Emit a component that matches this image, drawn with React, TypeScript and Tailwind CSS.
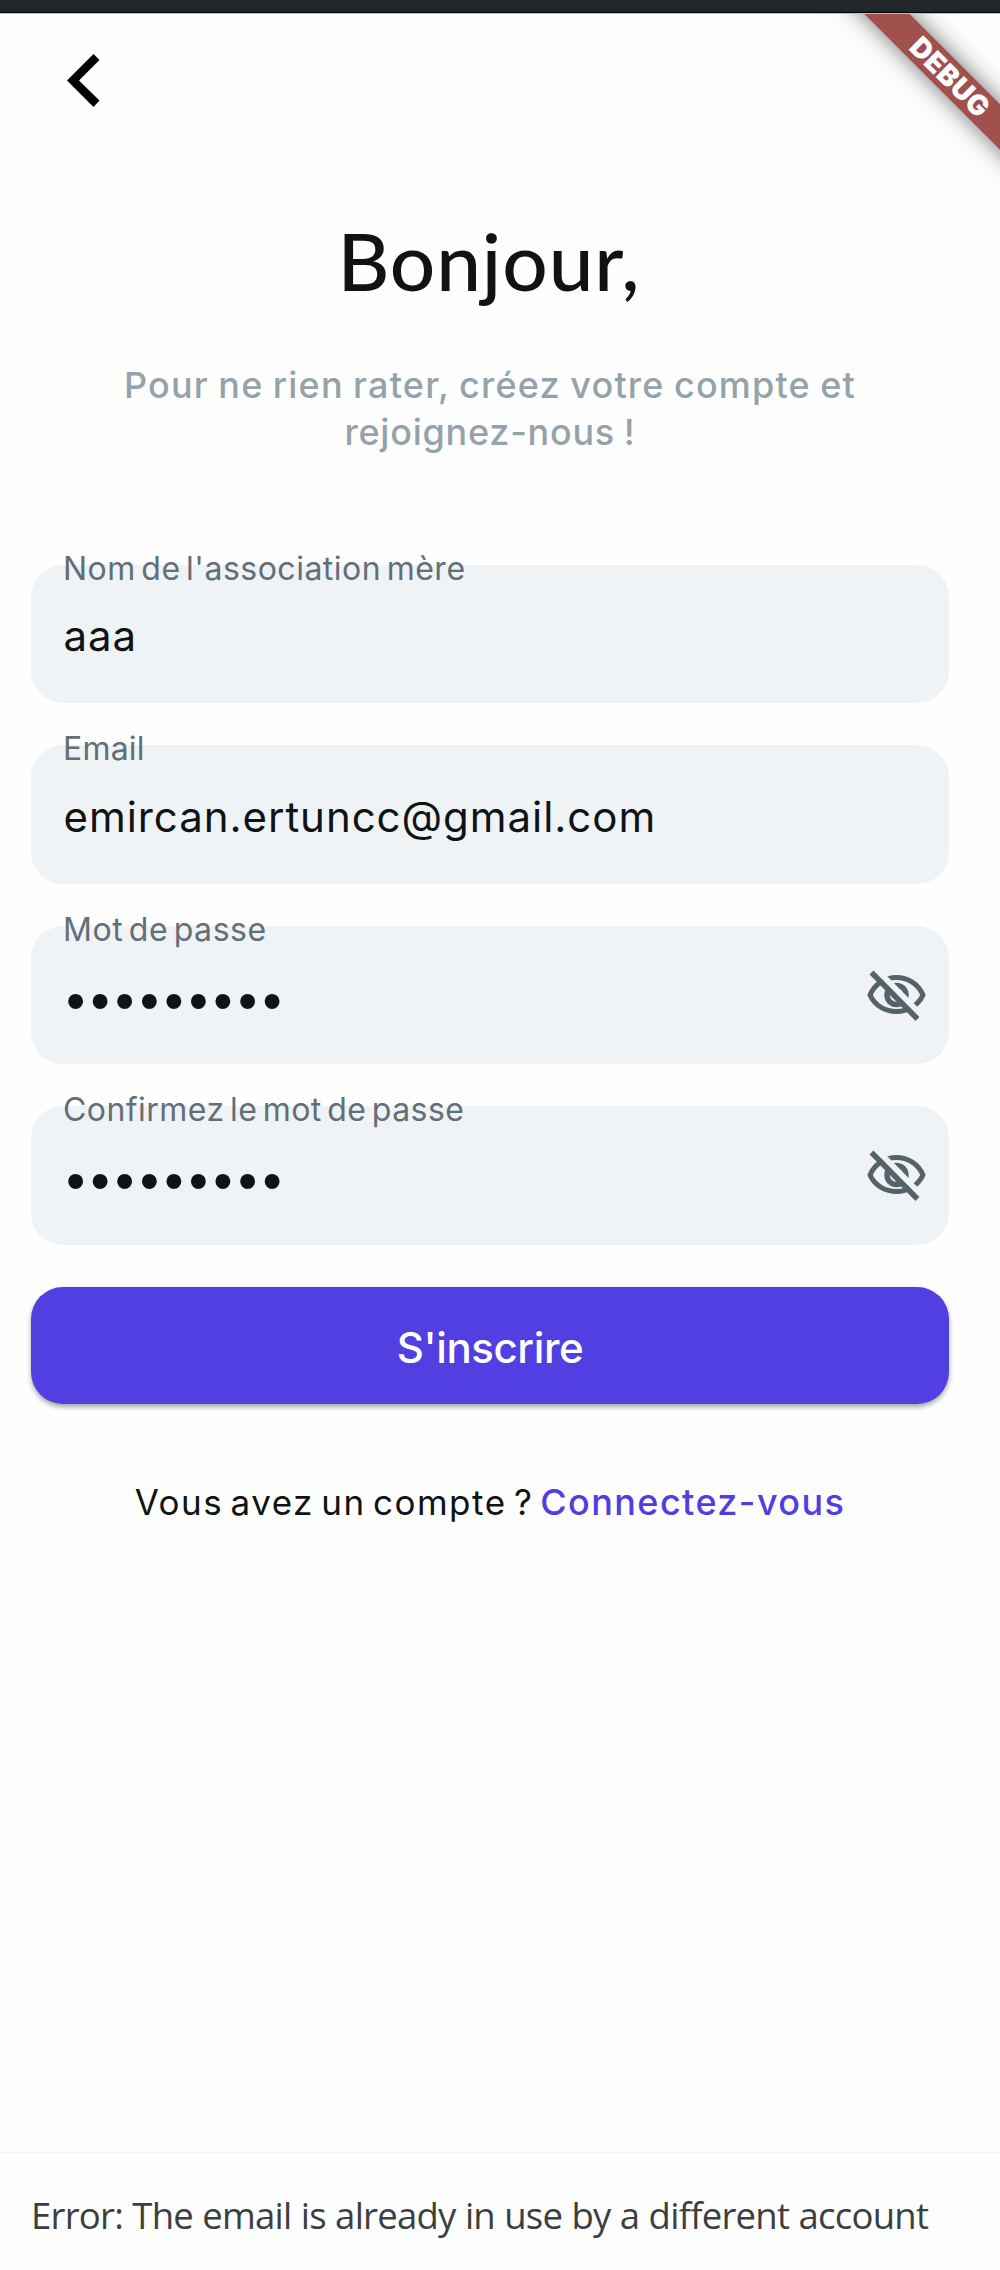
type FieldProps = {
  label: string;
  value: string;
  labelSpacing: string;
  secret?: boolean;
};

function EyeOff() {
  return (
    <svg width="60" height="52" viewBox="0 0 60 52" fill="none" stroke="#56626a" strokeWidth="5">
      <path d="M4 25C14 1.7 47 1.7 57 25C47 47 14 47 4 25Z" strokeLinejoin="round" />
      <circle cx="30.5" cy="25" r="9.5" strokeWidth="5.5" />
      <circle cx="29" cy="25" r="3.5" fill="#56626a" stroke="none" />
      <path d="M9 -2L58 48" stroke="#eff3f6" strokeWidth="6" />
      <path d="M5.5 2.5L51.5 49" strokeWidth="5.5" />
    </svg>
  );
}

function Field({ label, value, labelSpacing, secret = false }: FieldProps) {
  return (
    <div className="flex h-[138.5px] items-start justify-between rounded-[32px] bg-[#eff3f6] pl-[32px] pr-[23px]">
      <div className="flex flex-col whitespace-nowrap">
        <span className={`-mt-[12px] text-[32px] leading-[32px] text-[#636e75] [word-spacing:-4px] ${labelSpacing}`}>
          {label}
        </span>
        {secret ? (
          <span className="mt-[31px] pl-[3px] font-['Liberation_Sans',sans-serif] text-[55px] leading-[48px] tracking-[5.3px] text-[#0f1314]">
            {value}
          </span>
        ) : (
          <span className="mt-[27.5px] pl-[0.5px] text-[42px] leading-[48px] tracking-[0.95px] text-[#0f1314]">{value}</span>
        )}
      </div>
      {secret && (
        <button type="button" aria-label="Afficher le mot de passe" className="mt-[44px]">
          <EyeOff />
        </button>
      )}
    </div>
  );
}

export default function App() {
  return (
    <div className="relative flex h-[2270px] w-[1000px] flex-col overflow-hidden bg-[#fefefe] font-['Inter',sans-serif]">
      <div className="h-[14px] shrink-0 border-b border-[#bfc2c3] bg-[#212628]">
        <div className="h-[13px] border-b border-black" />
      </div>

      <div className="absolute right-0 top-[14px] h-[200px] w-[260px] overflow-hidden">
        <div className="absolute left-[59px] top-[46px] flex h-[32px] w-[300px] rotate-45 items-center justify-center bg-[#a0504d] pl-[3px] text-[28px] font-black leading-none tracking-[0.5px] text-white shadow-[0_0_24px_rgba(0,0,0,0.55)]">
          DEBUG
        </div>
      </div>

      <header className="flex h-[198px] shrink-0 items-start pl-[66px] pt-[39px]">
        <button type="button" aria-label="Retour">
          <svg width="34" height="56" viewBox="0 0 34 56">
            <path d="M1 27.5L27.5 1L33.5 7L13 27.5L33.5 47.5L27.5 54Z" fill="#000" />
          </svg>
        </button>
      </header>

      <main className="ml-[31px] flex w-[918px] flex-col">
        <h1 className="-ml-[2px] text-center font-['Lato',sans-serif] text-[80px] font-medium leading-[96px] tracking-[0.9px] text-[#0f1314]">
          Bonjour,
        </h1>
        <p className="mt-[53.5px] flex flex-col items-center whitespace-nowrap text-[36px] font-[450] leading-[47px] text-[#96a2aa] [word-spacing:-1.5px]">
          <span className="tracking-[1.2px]">Pour ne rien rater, créez votre compte et</span>
          <span className="tracking-[0.75px]">rejoignez-nous !</span>
        </p>

        <form className="mt-[109px] flex flex-col gap-[42px]">
          <Field label="Nom de l'association mère" value="aaa" labelSpacing="tracking-[0.5px]" />
          <Field label="Email" value="emircan.ertuncc@gmail.com" labelSpacing="tracking-[0.2px]" />
          <Field label="Mot de passe" value="•••••••••" labelSpacing="tracking-[0.55px]" secret />
          <Field label="Confirmez le mot de passe" value="•••••••••" labelSpacing="tracking-[0.45px]" secret />
          <button
            type="button"
            className="h-[117px] rounded-[32px] bg-[#523fe2] pt-[6px] text-[42px] font-medium leading-[48px] tracking-[-0.4px] text-white shadow-[0_3px_5px_rgba(0,0,0,0.35)]"
          >
            S'inscrire
          </button>
        </form>

        <p className="mt-[74.5px] flex justify-center gap-[7px] whitespace-nowrap text-[35px] leading-[48px] text-[#0f1314]">
          <span className="tracking-[1.5px] [word-spacing:-4px]">Vous avez un compte ?</span>
          <a className="text-[36px] font-medium tracking-[1.4px] text-[#513ee2]">Connectez-vous</a>
        </p>
      </main>

      <footer className="mt-auto flex h-[118px] shrink-0 items-start border-t border-[#f6f6f6] pl-[31px] pt-[38px]">
        <p className="whitespace-nowrap font-['Open_Sans',sans-serif] text-[36.5px] leading-[48px] tracking-[-0.75px] text-[#3c3e40] [word-spacing:0.5px]">
          Error: The email is already in use by a different account
        </p>
      </footer>
    </div>
  );
}
